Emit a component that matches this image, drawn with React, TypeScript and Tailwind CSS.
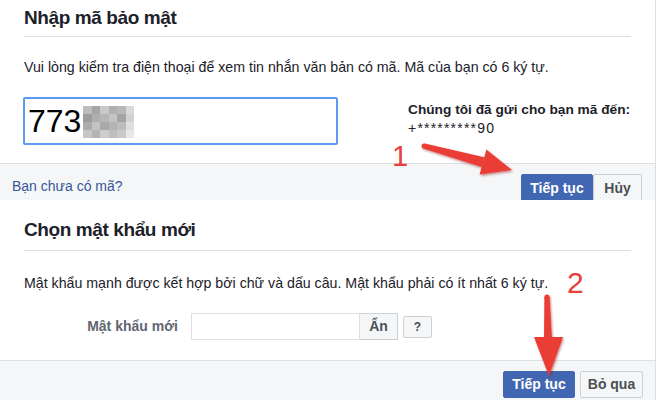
import React from "react";

const font = { fontFamily: '"Liberation Sans", Arial, sans-serif' };

// grey cells covering the hidden part of the code
const mosaic = [
  ["#bdbdbd", "#a6a6a6", "#c8c8c8", "#b0b0b0", "#b8b8b8", "#dadada"],
  ["#9d9d9d", "#afafaf", "#b6b6b6", "#c4c4c4", "#a4a4a4", "#d2d2d2"],
  ["#acacac", "#c3c3c3", "#a9a9a9", "#b3b3b3", "#bcbcbc", "#dedede"],
  ["#c6c6c6", "#b4b4b4", "#cccccc", "#bebebe", "#cacaca", "#e8e8e8"],
];

const Arrows = () => (
  <div className="absolute inset-0 pointer-events-none">
    <svg width="660" height="400" className="absolute left-0 top-0">
      <defs>
        <filter id="sh" x="-20%" y="-20%" width="140%" height="140%">
          <feDropShadow dx="1" dy="1.5" stdDeviation="1.2" floodColor="#7a1010" floodOpacity="0.45" />
        </filter>
      </defs>
      <g fill="#ea3d36" filter="url(#sh)">
        {/* arrow pointing at the first button */}
        <circle cx="424" cy="146" r="2.5" />
        <polygon points="424.7,143.6 484.3,157.3 481.7,166.9 423.3,148.4" />
        <polygon points="486.4,149.6 512,170 479.6,174.6" />
        {/* arrow pointing down at the second button */}
        <circle cx="547" cy="297" r="2.6" />
        <polygon points="544.4,297 549.6,297 552,340 544,340" />
        <polygon points="534,337 563,337 549,376" />
      </g>
    </svg>
    <span className="absolute left-[392px] top-[142px] text-[29px] leading-none text-[#e8403a]" style={font}>
      1
    </span>
    <span className="absolute left-[567px] top-[268px] text-[30px] leading-none text-[#e8403a]" style={font}>
      2
    </span>
  </div>
);

export default function App() {
  return (
    <div className="relative w-[660px] h-[400px] overflow-hidden bg-white text-[#1d2129]" style={font}>
      {/* security code step */}
      <div className="w-[656px] h-[200px] overflow-hidden border-r border-[#dddfe2] flex flex-col">
        <div className="mx-6 h-[37px] shrink-0 border-b border-[#dadde1] flex items-center">
          <h2 className="text-[19px] font-bold tracking-[-0.4px] leading-6">Nhập mã bảo mật</h2>
        </div>
        <div className="px-6 h-[126px] shrink-0">
          <p className="mt-[21px] text-[14.2px] leading-[18px] whitespace-nowrap">
            Vui lòng kiểm tra điện thoại để xem tin nhắn văn bản có mã. Mã của bạn có 6 ký tự.
          </p>
          <div className="mt-[21px] flex">
            <div className="ml-[-1px] w-[315px] h-[48px] shrink-0 border-2 border-[#5d9bf0] rounded-[2px] flex items-center pl-[3px]">
              <span className="text-[32px] leading-none text-black">773</span>
              <div className="ml-[2px] mt-[2px] grid grid-cols-6 blur-[0.6px]">
                {mosaic.flat().map((c, i) => (
                  <div key={i} className="w-[8.5px] h-[8px]" style={{ backgroundColor: c }} />
                ))}
              </div>
            </div>
            <div className="ml-[70px] pt-[4px] text-[13.7px] leading-[18px] whitespace-nowrap">
              <div className="font-bold">Chúng tôi đã gửi cho bạn mã đến:</div>
              <div className="text-[14px] tracking-[1.2px]">+*********90</div>
            </div>
          </div>
        </div>
        <div className="flex-1 border-t border-[#dddfe2] bg-[#f5f6f7] flex items-start justify-between pl-3 pr-[13px] pt-[10px]">
          <a className="mt-[3px] text-[14px] leading-[18px] text-[#365899]">Bạn chưa có mã?</a>
          <div className="flex">
            <button className="w-[72px] h-[28px] bg-[#4267b2] border border-[#4267b2] rounded-[2px] text-white text-[14px] font-bold">
              Tiếp tục
            </button>
            <button className="w-[49px] h-[28px] bg-[#f5f6f7] border border-[#ccd0d5] rounded-[2px] text-[#4b4f56] text-[14px] font-bold">
              Hủy
            </button>
          </div>
        </div>
      </div>

      {/* new password step */}
      <div className="w-[656px] h-[200px] border-r border-[#dddfe2] flex flex-col">
        <div className="mx-6 h-[51px] shrink-0 border-b border-[#dadde1] flex items-end pb-[8px]">
          <h2 className="text-[19px] font-bold tracking-[-0.4px] leading-6">Chọn mật khẩu mới</h2>
        </div>
        <div className="px-6">
          <p className="mt-[23px] text-[14.2px] leading-[18px] whitespace-nowrap">
            Mật khẩu mạnh được kết hợp bởi chữ và dấu câu. Mật khẩu phải có ít nhất 6 ký tự.
          </p>
          <div className="mt-[21px] flex items-center h-[27px]">
            <label className="w-[154px] text-right text-[14px] font-bold text-[#606770]">Mật khẩu mới</label>
            <div className="ml-[13px] w-[169px] h-[27px] border border-[#dddfe2] bg-white" />
            <button className="w-[38px] h-[27px] bg-[#f5f6f7] border border-[#ccd0d5] border-l-0 text-[14px] font-bold text-[#4b4f56]">
              Ẩn
            </button>
            <button className="ml-[5px] w-[29px] h-[22px] bg-[#f5f6f7] border border-[#ccd0d5] rounded-[2px] text-[12px] font-bold text-[#4b4f56]">
              ?
            </button>
          </div>
        </div>
        <div className="mt-[20px] flex-1 border-t border-[#dddfe2] bg-[#f5f6f7] flex justify-end gap-[5px] pr-[12px] pt-[10px]">
          <button className="w-[72px] h-[27px] bg-[#4267b2] border border-[#4267b2] rounded-[2px] text-white text-[14px] font-bold">
            Tiếp tục
          </button>
          <button className="w-[63px] h-[27px] bg-[#f5f6f7] border border-[#ccd0d5] rounded-[2px] text-[#4b4f56] text-[14px] font-bold">
            Bỏ qua
          </button>
        </div>
      </div>

      <Arrows />
    </div>
  );
}
